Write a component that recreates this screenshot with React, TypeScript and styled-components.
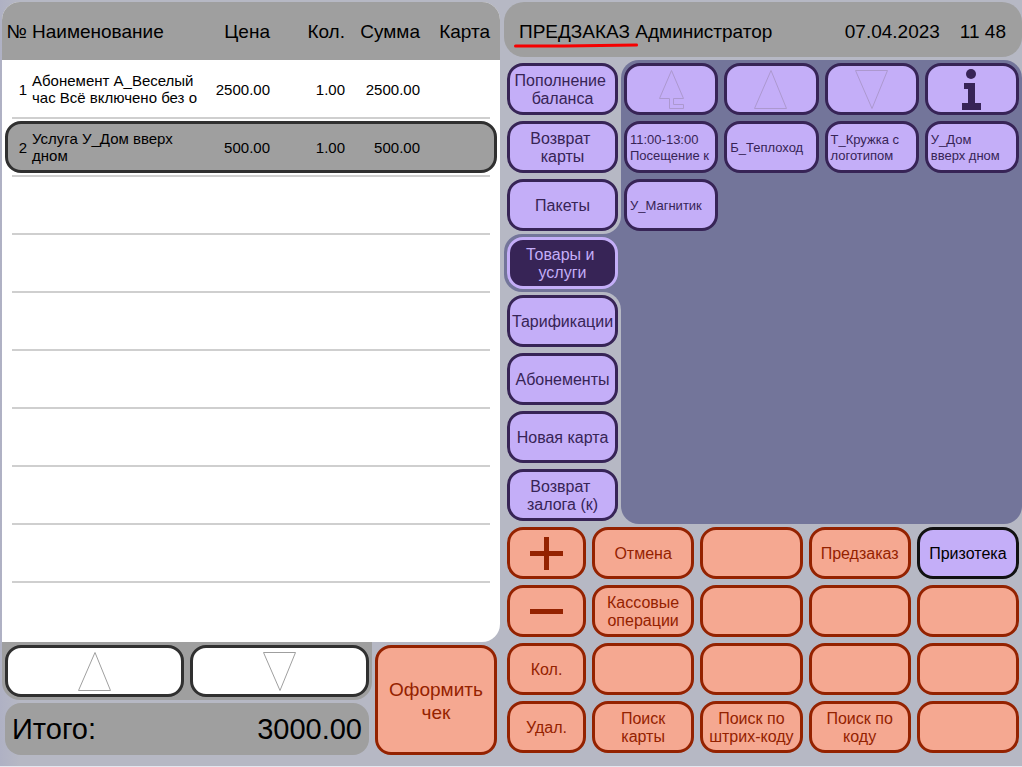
import React from "react";
import styled, { createGlobalStyle, css } from "styled-components";

const color = {
  page: "#b6b8c4",
  gray: "#9f9f9f",
  ink: "#000000",
  frame: "#303030",
  violet: "#c4aef8",
  plum: "#372456",
  slate: "#73759a",
  salmon: "#f5a891",
  rust: "#942200",
  line: "#cfcfcf",
};

const GlobalStyle = createGlobalStyle`
  *, *::before, *::after { box-sizing: border-box; }
  body {
    margin: 0;
    background: ${color.page};
    font-family: "Liberation Sans", Arial, sans-serif;
    color: ${color.ink};
  }
  button { font-family: inherit; cursor: pointer; }
`;

const Page = styled.div`
  display: grid;
  grid-template-columns: minmax(0, 498fr) minmax(0, 518fr);
  gap: 4px;
  align-items: start;
  min-height: 100vh;
  padding: 2px 0 0 2px;
  border-bottom: 1px solid #e6e7ee;
  background: linear-gradient(90deg, #afb1c4 0, ${color.page} 20px);
`;

/* Receipt */

const Receipt = styled.section`
  display: flex;
  flex-direction: column;
`;

const ReceiptTable = styled.table`
  display: block;
  background: #fff;
  border-radius: 18px 18px 18px 0;
  overflow: hidden;
`;

const TableHead = styled.thead`
  display: block;
  background: ${color.gray};
`;

const TableBody = styled.tbody`
  display: block;
  padding: 1px 0;
`;

const columns = css`
  display: grid;
  grid-template-columns: 22px minmax(0, 1fr) 68px 75px 75px 70px;
  align-items: center;
  height: 58px;
`;

const HeadRow = styled.tr`
  ${columns}
  padding: 2px 10px 0 3px;
`;

const ItemRow = styled.tr<{ $selected?: boolean }>`
  ${columns}
  position: relative;
  padding: 0 10px 2px 3px;

  &:not(:last-child)::after {
    content: "";
    position: absolute;
    inset: auto 10px 0 10px;
    height: 2px;
    background: ${color.line};
  }

  ${(p) =>
    p.$selected &&
    css`
      &::before {
        content: "";
        position: absolute;
        inset: 2px 3px 4px 3px;
        border: 3px solid ${color.frame};
        border-radius: 16px;
        background: ${color.gray};
      }
    `}
`;

const HeadCell = styled.th<{ $start?: boolean }>`
  padding: 0 0 0 ${(p) => (p.$start ? 5 : 0)}px;
  font-size: 19px;
  font-weight: 400;
  line-height: 22px;
  white-space: nowrap;
  text-align: ${(p) => (p.$start ? "left" : "right")};
`;

const Cell = styled.td<{ $start?: boolean }>`
  position: relative;
  padding: 0 0 0 ${(p) => (p.$start ? 5 : 0)}px;
  font-size: 15px;
  line-height: 17px;
  white-space: pre;
  text-align: ${(p) => (p.$start ? "left" : "right")};
`;

const Footer = styled.div`
  display: grid;
  grid-template-columns: minmax(0, 1fr) 128px;
`;

const FooterMain = styled.div`
  display: flex;
  flex-direction: column;
  gap: 3px;
`;

const Scroller = styled.div`
  display: grid;
  grid-template-columns: 1fr 1fr;
  gap: 6px;
  padding: 3px;
  border-radius: 0 0 18px 18px;
  background: ${color.gray};
`;

const Total = styled.div`
  display: flex;
  justify-content: space-between;
  align-items: center;
  height: 52px;
  margin: 0 3px;
  padding: 0 7px;
  border-radius: 16px;
  background: ${color.gray};
  font-size: 29px;
  line-height: 32px;
`;

/* Buttons */

type Tone = "violet" | "active" | "salmon" | "white" | "black";

const tones: Record<Tone, { bg: string; fg: string; border: string }> = {
  violet: { bg: color.violet, fg: color.plum, border: color.plum },
  active: { bg: color.plum, fg: color.violet, border: color.violet },
  salmon: { bg: color.salmon, fg: color.rust, border: color.rust },
  white: { bg: "#ffffff", fg: color.gray, border: color.frame },
  black: { bg: color.violet, fg: color.ink, border: "#111111" },
};

const Key = styled.button<{ $tone: Tone }>`
  display: flex;
  align-items: center;
  justify-content: center;
  width: 100%;
  min-width: 0;
  height: 52px;
  padding: 0;
  border: 3px solid ${(p) => tones[p.$tone].border};
  border-radius: 16px;
  background: ${(p) => tones[p.$tone].bg};
  color: ${(p) => tones[p.$tone].fg};
  font-size: 16px;
  line-height: 18px;
  white-space: pre;
  overflow: hidden;
`;

const TextKey = styled(Key)`
  padding-top: 2px;
`;

const CheckoutKey = styled(TextKey)`
  width: auto;
  height: auto;
  margin: 3px 3px 0;
  font-size: 19px;
  line-height: 23px;
`;

const ProductKey = styled(Key)`
  justify-content: flex-start;
  padding: 2px 0 0 3px;
  font-size: 13px;
  line-height: 16px;
  text-align: left;
`;

/* Workspace */

const Workspace = styled.main`
  display: flex;
  flex-direction: column;
`;

const StatusBar = styled.header`
  display: flex;
  align-items: center;
  height: 55px;
  margin-bottom: 3px;
  padding: 5px 16px 0 15px;
  border-radius: 20px;
  background: ${color.gray};
  font-size: 19px;
  line-height: 22px;
  white-space: pre;
`;

const Mode = styled.span`
  position: relative;
`;

const Underline = styled.svg`
  position: absolute;
  left: -5px;
  top: 21px;
  width: calc(100% + 13px);
  height: 6px;
  overflow: visible;
`;

const Clock = styled.time`
  display: flex;
  gap: 20px;
  margin-left: auto;
`;

const Catalog = styled.div`
  display: grid;
  grid-template-columns: 117px minmax(0, 1fr);
`;

const Tabs = styled.nav`
  display: flex;
  flex-direction: column;
`;

type Place = "before" | "active" | "after" | undefined;

const TabSlot = styled.div<{ $place: Place }>`
  border-radius: ${(p) => (p.$place === "active" ? "18px 0 0 18px" : "0")};
  background: ${(p) =>
    p.$place === "active"
      ? color.slate
      : p.$place
        ? `linear-gradient(90deg, ${color.page} 50%, ${color.slate} 50%)`
        : "transparent"};
`;

const TabPad = styled.div<{ $place: Place }>`
  padding: 3px;
  background: ${(p) => (p.$place === "before" || p.$place === "after" ? color.page : "transparent")};
  border-radius: ${(p) =>
    p.$place === "before" ? "0 0 18px 0" : p.$place === "after" ? "0 18px 0 0" : "0"};
`;

const Products = styled.section`
  display: grid;
  grid-template-columns: repeat(4, minmax(0, 1fr));
  align-content: start;
  gap: 6px;
  padding: 3px;
  border-radius: 18px;
  background: ${color.slate};
`;

const Actions = styled.section`
  display: grid;
  grid-template-columns: 79px repeat(4, minmax(0, 1fr));
  gap: 6px;
  padding: 3px;
`;

/* Icons */

const Triangle = ({ down, stroke }: { down?: boolean; stroke: string }) => (
  <svg width="34" height="40" viewBox="0 0 34 40" fill="none" stroke={stroke} aria-hidden="true">
    <path d={down ? "M.5 1.5h32L17 39.5Z" : "M.5 39.5h32L17 1.5Z"} />
  </svg>
);

const LevelUp = () => (
  <svg width="26" height="40" viewBox="0 0 26 40" fill="none" stroke="#ac98cf" aria-hidden="true">
    <path d="M13.500 1.500 1.500 29.500H11.500V39.500H25.500V35.500H15.500V29.500H25.500Z" />
  </svg>
);

const Info = () => (
  <svg width="20" height="42" viewBox="0 0 20 42" fill="currentColor" aria-hidden="true">
    <circle cx="9" cy="6" r="5" />
    <path d="M2 15h11v20h6v7H0v-7h6V21H2Z" />
  </svg>
);

const Plus = () => (
  <svg width="33" height="33" viewBox="0 0 33 33" fill="currentColor" aria-hidden="true">
    <path d="M14 0h5v14h14v5H19v14h-5V19H0v-5h14Z" />
  </svg>
);

const Minus = () => (
  <svg width="33" height="5" viewBox="0 0 33 5" fill="currentColor" aria-hidden="true">
    <path d="M0 0h33v5H0Z" />
  </svg>
);

/* Data */

const items = [
  { name: "Абонемент А_Веселый\nчас Всё включено без о", price: "2500.00", qty: "1.00", sum: "2500.00" },
  { name: "Услуга У_Дом вверх\nдном", price: "500.00", qty: "1.00", sum: "500.00" },
];
const selectedItem = 1;
const blankRows = 8;

const tabs = [
  "Пополнение \nбаланса",
  "Возврат \nкарты",
  "Пакеты",
  "Товары и \nуслуги",
  "Тарификации",
  "Абонементы",
  "Новая карта",
  "Возврат \nзалога (к)",
];
const activeTab = 3;

const products = [
  "11:00-13:00\nПосещение к",
  "Б_Теплоход",
  "Т_Кружка с\nлоготипом",
  "У_Дом\nвверх дном",
  "У_Магнитик",
];

const actions: { label: string; icon?: React.ReactNode; tone?: Tone }[] = [
  { label: "Плюс", icon: <Plus /> },
  { label: "Отмена" },
  { label: "" },
  { label: "Предзаказ" },
  { label: "Призотека", tone: "black" },
  { label: "Минус", icon: <Minus /> },
  { label: "Кассовые\nоперации" },
  { label: "" },
  { label: "" },
  { label: "" },
  { label: "Кол." },
  { label: "" },
  { label: "" },
  { label: "" },
  { label: "" },
  { label: "Удал." },
  { label: "Поиск\nкарты" },
  { label: "Поиск по\nштрих-коду" },
  { label: "Поиск по\nкоду" },
  { label: "" },
];

const placeOf = (i: number): Place =>
  i === activeTab ? "active" : i === activeTab - 1 ? "before" : i === activeTab + 1 ? "after" : undefined;

export default function App() {
  return (
    <>
      <GlobalStyle />
      <Page>
        <Receipt>
          <ReceiptTable>
            <TableHead>
              <HeadRow>
                <HeadCell>№</HeadCell>
                <HeadCell $start>Наименование</HeadCell>
                <HeadCell>Цена</HeadCell>
                <HeadCell>Кол.</HeadCell>
                <HeadCell>Сумма</HeadCell>
                <HeadCell>Карта</HeadCell>
              </HeadRow>
            </TableHead>
            <TableBody>
              {items.map((item, i) => (
                <ItemRow key={item.name} $selected={i === selectedItem}>
                  <Cell>{i + 1}</Cell>
                  <Cell $start>{item.name}</Cell>
                  <Cell>{item.price}</Cell>
                  <Cell>{item.qty}</Cell>
                  <Cell>{item.sum}</Cell>
                  <Cell />
                </ItemRow>
              ))}
              {Array.from({ length: blankRows }, (_, i) => (
                <ItemRow key={i}>
                  <Cell />
                </ItemRow>
              ))}
            </TableBody>
          </ReceiptTable>
          <Footer>
            <FooterMain>
              <Scroller>
                <Key $tone="white" aria-label="Вверх">
                  <Triangle stroke={color.gray} />
                </Key>
                <Key $tone="white" aria-label="Вниз">
                  <Triangle down stroke={color.gray} />
                </Key>
              </Scroller>
              <Total>
                <span>Итого:</span>
                <span>3000.00</span>
              </Total>
            </FooterMain>
            <CheckoutKey $tone="salmon">{"Оформить\nчек"}</CheckoutKey>
          </Footer>
        </Receipt>

        <Workspace>
          <StatusBar>
            <Mode>
              ПРЕДЗАКАЗ
              <Underline viewBox="0 0 124 6" preserveAspectRatio="none" aria-hidden="true">
                <path d="M1.500 4 50 4 122.500 3" stroke="#f60000" strokeWidth="3" strokeLinecap="round" fill="none" />
              </Underline>
            </Mode>
            <span> Администратор</span>
            <Clock dateTime="2023-04-07T11:48">
              <span>07.04.2023</span>
              <span>11 48</span>
            </Clock>
          </StatusBar>
          <Catalog>
            <Tabs>
              {tabs.map((label, i) => (
                <TabSlot key={label} $place={placeOf(i)}>
                  <TabPad $place={placeOf(i)}>
                    <TextKey $tone={i === activeTab ? "active" : "violet"}>{label}</TextKey>
                  </TabPad>
                </TabSlot>
              ))}
            </Tabs>
            <Products>
              <Key $tone="violet" aria-label="На уровень выше">
                <LevelUp />
              </Key>
              <Key $tone="violet" aria-label="Вверх">
                <Triangle stroke="#ac98cf" />
              </Key>
              <Key $tone="violet" aria-label="Вниз">
                <Triangle down stroke="#ac98cf" />
              </Key>
              <Key $tone="violet" aria-label="Информация">
                <Info />
              </Key>
              {products.map((label) => (
                <ProductKey key={label} $tone="violet">
                  {label}
                </ProductKey>
              ))}
            </Products>
          </Catalog>
          <Actions>
            {actions.map(({ label, icon, tone = "salmon" }, i) =>
              icon ? (
                <Key key={i} $tone={tone} aria-label={label}>
                  {icon}
                </Key>
              ) : (
                <TextKey key={i} $tone={tone}>
                  {label}
                </TextKey>
              ),
            )}
          </Actions>
        </Workspace>
      </Page>
    </>
  );
}
